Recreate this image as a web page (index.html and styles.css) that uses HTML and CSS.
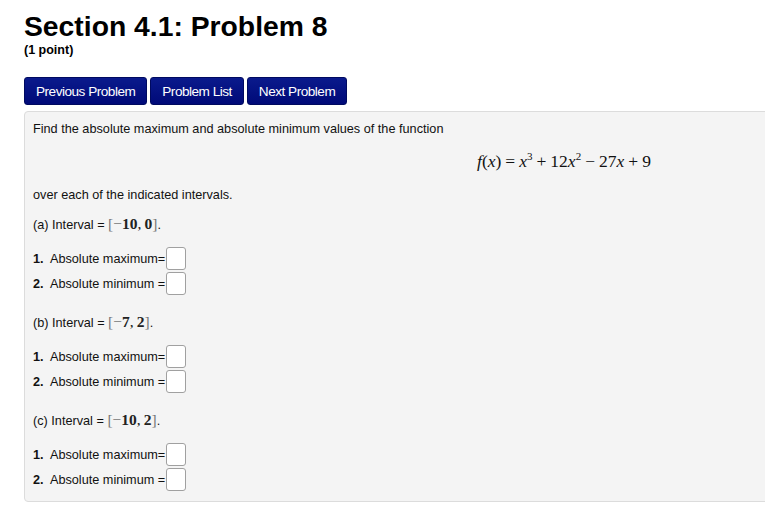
FILE: index.html
```html
<!DOCTYPE html>
<html>
<head>
<meta charset="utf-8">
<link rel="stylesheet" href="styles.css">
</head>
<body>
<div class="page">
  <h1 class="title">Section 4.1: Problem 8</h1>
  <div class="points">(1 point)</div>
  <nav class="nav">
    <a class="btn">Previous Problem</a>
    <a class="btn">Problem List</a>
    <a class="btn">Next Problem</a>
  </nav>
  <div class="panel">
    <p class="line first">Find the absolute maximum and absolute minimum values of the function</p>
    <div class="display"><span class="math"><i>f</i>(<i>x</i>)<span class="op">=</span><i>x</i><sup>3</sup><span class="op">+</span>12<i>x</i><sup>2</sup><span class="op">−</span>27<i>x</i><span class="op">+</span>9</span></div>
    <p class="line">over each of the indicated intervals.</p>

    <p class="line interval">(a) Interval = <span class="imath"><span class="br">[</span><span class="br">−</span><b>10</b>,&thinsp;<b>0</b><span class="br">]</span></span>.</p>
    <div class="answers">
      <div class="ans"><b>1.</b>&nbsp; Absolute maximum=<span class="box"></span></div>
      <div class="ans"><b>2.</b>&nbsp; Absolute minimum =<span class="box"></span></div>
    </div>

    <p class="line interval">(b) Interval = <span class="imath"><span class="br">[</span><span class="br">−</span><b>7</b>,&thinsp;<b>2</b><span class="br">]</span></span>.</p>
    <div class="answers">
      <div class="ans"><b>1.</b>&nbsp; Absolute maximum=<span class="box"></span></div>
      <div class="ans"><b>2.</b>&nbsp; Absolute minimum =<span class="box"></span></div>
    </div>

    <p class="line interval">(c) Interval = <span class="imath"><span class="br">[</span><span class="br">−</span><b>10</b>,&thinsp;<b>2</b><span class="br">]</span></span>.</p>
    <div class="answers">
      <div class="ans"><b>1.</b>&nbsp; Absolute maximum=<span class="box"></span></div>
      <div class="ans"><b>2.</b>&nbsp; Absolute minimum =<span class="box"></span></div>
    </div>
  </div>
</div>
</body>
</html>
```
FILE: styles.css
```css
html, body {
  margin: 0;
  padding: 0;
  background: #fff;
  overflow: hidden;
}
body {
  font-family: "Liberation Sans", Arial, sans-serif;
  color: #000;
}
.page {
  padding: 0 0 0 24px;
  width: 790px;
}
.title {
  margin: 0;
  padding-top: 10px;
  font-size: 28.3px;
  line-height: 32px;
  font-weight: bold;
}
.points {
  font-size: 12.5px;
  font-weight: bold;
  line-height: 14px;
  margin-top: 1px;
}
.nav {
  display: flex;
  gap: 3px;
  margin-top: 20px;
}
.btn {
  display: block;
  background: linear-gradient(#0a1a8c, #000a78);
  color: #fff;
  font-size: 13.6px;
  letter-spacing: -0.5px;
  height: 28px;
  line-height: 28px;
  padding: 0 11px;
  border-radius: 3px;
  border: 1px solid #000a60;
  box-sizing: border-box;
}
.panel {
  margin-top: 6px;
  background: #f4f4f4;
  border: 1px solid #dcdcdc;
  border-radius: 4px;
  padding: 9px 8px 0 8px;
  font-size: 12.7px;
  color: #111;
  height: 391px;
  box-sizing: border-box;
}
.line {
  margin: 0;
  line-height: 16px;
}
.display {
  margin: 14px 0 16px 0;
  padding-left: 444px;
  height: 20px;
  line-height: 20px;
}
.math {
  font-family: "Liberation Serif", "DejaVu Serif", serif;
  font-size: 17.5px;
  color: #111;
}
.math i { font-style: italic; }
.math .op { padding: 0 4px; }
.math sup { font-size: 11px; line-height: 0; vertical-align: 7px; }
.interval {
  margin-top: 13px;
}
.imath {
  font-family: "Liberation Serif", "DejaVu Serif", serif;
  font-size: 15.5px;
}
.imath .br { color: #777; }
.imath b { font-weight: bold; color: #222; }
.answers {
  margin-top: 13px;
  margin-bottom: 18px;
}
.ans {
  display: flex;
  align-items: center;
  height: 25px;
  line-height: 16px;
}
.ans b { font-weight: bold; }
.box {
  display: inline-block;
  width: 20px;
  height: 23px;
  box-sizing: border-box;
  border: 1px solid #a0a0a0;
  border-radius: 3px;
  background: #fff;
  margin-left: 1px;
}
```
